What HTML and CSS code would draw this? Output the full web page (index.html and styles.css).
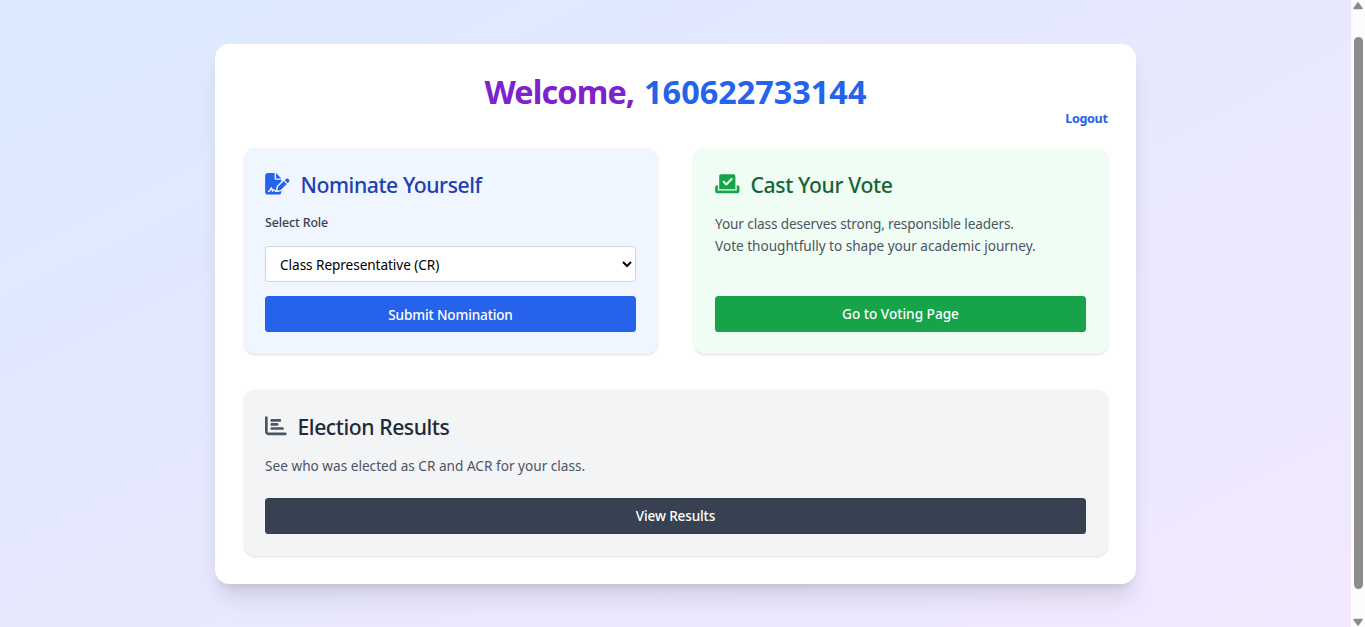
FILE: index.html
```html
<!DOCTYPE html>
<html lang="en">
<head>
<meta charset="utf-8">
<title>Student Dashboard</title>
<link rel="stylesheet" href="styles.css">
</head>
<body>
<div class="viewport">
  <div class="page">
    <main class="panel">
      <h1 class="welcome"><span class="hello">Welcome,</span> <span class="user-id">160622733144</span></h1>
      <div class="logout-row"><a class="logout">Logout</a></div>
      <div class="cards">
        <section class="card card-blue">
          <h2 class="card-title">
            <svg class="icon icon-wide" viewBox="0 0 576 512" fill="currentColor"><path d="M64 0C28.7 0 0 28.7 0 64V448c0 35.3 28.7 64 64 64H320c35.3 0 64-28.7 64-64V428.7c-2.7 1.1-5.4 2-8.2 2.7l-60.1 15c-3 .7-6 1.2-9 1.4c-.9 .1-1.8 .2-2.7 .2H240c-6.1 0-11.6-3.4-14.3-8.8l-8.8-17.7c-1.7-3.4-5.1-5.5-8.8-5.5s-7.2 2.1-8.8 5.5l-8.8 17.7c-2.9 5.9-9.2 9.4-15.7 8.8s-12.1-5.1-13.9-11.3L144 381l-9.8 32.8c-6.1 20.3-24.8 34.2-46 34.2H80c-8.8 0-16-7.2-16-16s7.2-16 16-16h8.2c7.1 0 13.3-4.6 15.3-11.4l14.9-49.5c3.4-11.3 13.8-19.1 25.6-19.1s22.2 7.8 25.6 19.1l11.6 38.6c7.4-6.2 16.8-9.7 26.8-9.7c15.9 0 30.4 9 37.5 23.2l4.4 8.8h8.9c-3.1-8.8-3.7-18.4-1.4-27.8l15-60.1c2.8-11.3 8.6-21.5 16.8-29.7L384 203.6V160H256c-17.7 0-32-14.3-32-32V0H64zM256 0V128H384L256 0zM549.8 139.7c-15.6-15.6-40.9-15.6-56.6 0l-29.4 29.4 71 71 29.4-29.4c15.6-15.6 15.6-40.9 0-56.6l-14.4-14.4zM311.9 321c-4.1 4.1-7 9.2-8.4 14.9l-15 60.1c-1.4 5.5 .2 11.2 4.2 15.2s9.7 5.6 15.2 4.2l60.1-15c5.6-1.4 10.8-4.3 14.9-8.4L512.1 262.7l-71-71L311.9 321z"/></svg>
            <span class="t-nominate">Nominate Yourself</span>
          </h2>
          <label class="label" for="role">Select Role</label>
          <select class="select" id="role"><option>Class Representative (CR)</option></select>
          <button class="btn btn-blue"><span class="b-submit">Submit Nomination</span></button>
        </section>
        <section class="card card-green">
          <h2 class="card-title">
            <svg class="icon icon-wide" viewBox="0 0 576 512" fill="currentColor"><path d="M96 80c0-26.5 21.5-48 48-48H432c26.5 0 48 21.5 48 48V384H96V80zm313 47c-9.4-9.4-24.6-9.4-33.9 0l-111 111-47-47c-9.4-9.4-24.6-9.4-33.9 0s-9.4 24.6 0 33.9l64 64c9.4 9.4 24.6 9.4 33.9 0L409 161c9.4-9.4 9.4-24.6 0-33.9zM0 336c0-26.5 21.5-48 48-48H64V416H512V288h16c26.5 0 48 21.5 48 48v96c0 26.5-21.5 48-48 48H48c-26.5 0-48-21.5-48-48V336z"/></svg>
            <span class="t-vote">Cast Your Vote</span>
          </h2>
          <p class="text"><span class="p-one">Your class deserves strong, responsible leaders.</span><br><span class="p-two">Vote thoughtfully to shape your academic journey.</span></p>
          <button class="btn btn-green"><span class="b-vote">Go to Voting Page</span></button>
        </section>
      </div>
      <section class="card card-gray">
        <h2 class="card-title">
          <svg class="icon" viewBox="0 0 512 512" fill="currentColor"><path d="M32 32c17.7 0 32 14.3 32 32V400c0 8.8 7.2 16 16 16H480c17.7 0 32 14.3 32 32s-14.3 32-32 32H80c-44.2 0-80-35.8-80-80V64C0 46.3 14.3 32 32 32zm96 96c0-17.7 14.3-32 32-32l192 0c17.7 0 32 14.3 32 32s-14.3 32-32 32l-192 0c-17.7 0-32-14.3-32-32zm32 64H288c17.7 0 32 14.3 32 32s-14.3 32-32 32H160c-17.7 0-32-14.3-32-32s14.3-32 32-32zm0 96H416c17.7 0 32 14.3 32 32s-14.3 32-32 32H160c-17.7 0-32-14.3-32-32s14.3-32 32-32z"/></svg>
          <span class="t-results">Election Results</span>
        </h2>
        <p class="text"><span class="p-three">See who was elected as CR and ACR for your class.</span></p>
        <button class="btn btn-dark"><span class="b-results">View Results</span></button>
      </section>
    </main>
  </div>
  <div class="scrollbar">
    <svg class="arrow" viewBox="0 0 10 8"><path d="M5 0 5.6 .4 9.6 6Q10 7.2 9 7.2H1Q0 7.2 .4 6L4.4 .4Z" fill="#8b8b8b"/></svg>
    <div class="thumb"></div>
    <svg class="arrow" viewBox="0 0 10 8"><path d="M5 8 5.6 7.6 9.6 2Q10 .8 9 .8H1Q0 .8 .4 2L4.4 7.6Z" fill="#8b8b8b"/></svg>
  </div>
</div>
</body>
</html>
```
FILE: styles.css
```css
* { box-sizing: border-box; }
html { font-size: 14.4px; }
body { margin: 0; overflow: hidden; font-family: "Noto Sans", "Open Sans", sans-serif; }
h1, h2, p { margin: 0; }
span { white-space: nowrap; }

.viewport { display: flex; width: 1365px; height: 627px; overflow: hidden; }
.page {
  flex: 1;
  height: 682px;
  margin-top: -27px;
  display: flex;
  justify-content: center;
  align-items: center;
  background: linear-gradient(to bottom right, #dbeafe, #e6e8fe 47%, #f3e8ff);
}
.panel {
  width: 64rem;
  height: 540px;
  padding: 2rem;
  background: #fff;
  border-radius: 14.4px;
  box-shadow: 0 18px 22.5px -4.5px rgba(0,0,0,.1), 0 7.2px 9px -5.4px rgba(0,0,0,.1);
}
.welcome { height: 36px; line-height: 37px; text-align: center; font-size: 32.4px; font-weight: 700; word-spacing: 1.5px; }
.hello { color: #7e22ce; letter-spacing: -0.9px; }
.user-id { color: #2563eb; }
.logout-row { display: flex; justify-content: flex-end; height: 39.2px; }
.logout { line-height: 20px; font-size: 12.6px; font-weight: 700; letter-spacing: -0.35px; color: #2563eb; }

.cards { display: grid; grid-template-columns: 1fr 1fr; gap: 36px; margin-bottom: 36px; }
.card {
  display: flex;
  flex-direction: column;
  height: 206px;
  padding: 21.6px;
  border-radius: 10.8px;
  box-shadow: 0 1px 2.7px rgba(0,0,0,.1), 0 1px 2px -1px rgba(0,0,0,.1);
}
.card-blue { background: #eff6ff; }
.card-green { background: #f0fdf4; }
.card-gray { background: #f3f4f6; height: 165.6px; }
.card-title { display: flex; align-items: center; gap: 10.8px; height: 28.8px; line-height: 30px; font-size: 21.2px; font-weight: 500; }
.card-title span { padding-top: 2px; }
.t-nominate { letter-spacing: -0.44px; }
.t-vote { letter-spacing: -0.38px; }
.t-results { letter-spacing: -0.44px; }
.icon { width: 21.6px; height: 21.6px; flex: none; }
.icon-wide { width: 24.6px; }
.card-blue .card-title { color: #1e40af; }
.card-blue .icon { color: #2563eb; }
.card-green .card-title { color: #166534; }
.card-green .icon { color: #16a34a; }
.card-gray .card-title { color: #1f2937; }
.card-gray .icon { color: #4b5563; }

.label { margin-top: 15.5px; line-height: 18px; font-size: 12.4px; font-weight: 500; letter-spacing: -0.12px; color: #374151; }
.select {
  width: 100%;
  height: 36px;
  margin: auto 0 14px;
  padding: 1px 10px 0;
  border: 1px solid #d1d5db;
  border-radius: 3.6px;
  background: #fff;
  color: #000;
  font: 13.6px "Noto Sans", sans-serif;
  letter-spacing: -0.06px;
}
.text { margin-top: 15px; line-height: 22px; font-size: 13.6px; color: #4b5563; }
.p-one { letter-spacing: -0.12px; }
.p-two { letter-spacing: -0.02px; }
.p-three { letter-spacing: 0.01px; }
.btn {
  height: 36px;
  padding: 0;
  border: 0;
  border-radius: 3.6px;
  color: #fff;
  font: 500 13.6px "Noto Sans", sans-serif;
}
.b-submit { letter-spacing: -0.16px; }
.b-results { letter-spacing: -0.15px; }
.card-green .btn, .card-gray .btn { margin-top: auto; padding-bottom: 1px; }
.btn-blue { background: #2563eb; }
.btn-green { background: #16a34a; }
.btn-dark { background: #374151; }

.scrollbar { display: flex; flex-direction: column; align-items: center; width: 14px; height: 627px; padding: 2px 0 1px; background: #fcfcfc; }
.arrow { width: 10px; height: 8px; }
.thumb { width: 9px; height: 552px; margin: 27px 0 auto; border-radius: 5px; background: #8b8b8b; }
```
